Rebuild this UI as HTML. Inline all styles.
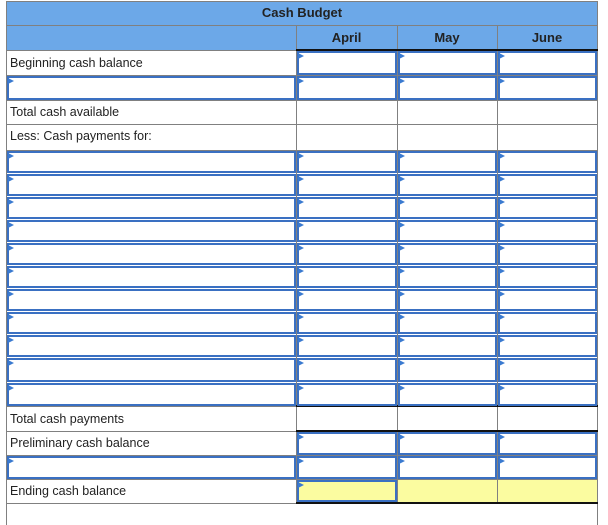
<!DOCTYPE html><html><head><style>
body{margin:0;width:608px;height:525px;background:#fff;position:relative;overflow:hidden;font-family:"Liberation Sans",Arial,sans-serif;font-size:12.5px;color:#222}
div{position:absolute;box-sizing:border-box}
.h{left:6px;width:592px;height:1px;background:#808080}
.v{width:1px;background:#808080}
.b{border:2px solid #3a70c2}
.b::before{content:"";position:absolute;left:-1px;top:0;border-left:6px solid #3a7ad0;border-top:3.5px solid transparent;border-bottom:3.5px solid transparent}
.t{left:10px;line-height:24px}
.y{background:#fbfca0}
.k{height:2px;background:#111}
</style></head><body>
<div style="left:6px;top:1px;width:592px;height:49px;background:#6ca8e8"></div>
<div style="left:6px;top:5px;width:592px;text-align:center;font-weight:bold;font-size:13px">Cash Budget</div>
<div style="left:296px;top:30px;width:101px;text-align:center;font-weight:bold;font-size:13px">April</div>
<div style="left:397px;top:30px;width:100px;text-align:center;font-weight:bold;font-size:13px">May</div>
<div style="left:497px;top:30px;width:100px;text-align:center;font-weight:bold;font-size:13px">June</div>
<div class="h" style="top:1px"></div><div class="h" style="top:25px;left:6px"></div>
<!-- yellow -->
<div class="y" style="left:297px;top:480px;width:300px;height:23px"></div>
<!-- verticals -->
<div class="v" style="left:6px;top:1px;height:524px"></div>
<div class="v" style="left:597px;top:1px;height:524px"></div>
<div class="v" style="left:296px;top:25px;height:478px"></div>
<div class="v" style="left:397px;top:25px;height:478px"></div>
<div class="v" style="left:497px;top:25px;height:478px"></div>
<!-- horizontals -->
<div class="h" style="top:50px"></div><div class="k h" style="top:49px;left:296px;width:302px"></div>
<div class="h" style="top:75px"></div><div class="h" style="top:100px"></div><div class="h" style="top:124px"></div><div class="h" style="top:150px"></div>
<div class="h" style="top:406px"></div><div class="k h" style="top:405px;left:296px;width:302px"></div>
<div class="h" style="top:431px"></div><div class="k h" style="top:430px;left:296px;width:302px"></div>
<div class="h" style="top:455px"></div><div class="h" style="top:479px"></div>
<div class="h" style="top:503px"></div><div class="k h" style="top:502px;left:296px;width:302px"></div>
<!-- labels -->
<div class="t" style="top:51px">Beginning cash balance</div>
<div class="t" style="top:100px">Total cash available</div>
<div class="t" style="top:124px">Less: Cash payments for:</div>
<div class="t" style="top:407px">Total cash payments</div>
<div class="t" style="top:431px">Preliminary cash balance</div>
<div class="t" style="top:479px">Ending cash balance</div>
<!-- row 50-75 -->
<div class="b" style="left:297px;top:51px;width:100px;height:24px"></div><div class="b" style="left:398px;top:51px;width:99px;height:24px"></div><div class="b" style="left:498px;top:51px;width:99px;height:24px"></div>
<!-- row 75-100 -->
<div class="b" style="left:7px;top:76px;width:289px;height:24px"></div><div class="b" style="left:297px;top:76px;width:100px;height:24px"></div><div class="b" style="left:398px;top:76px;width:99px;height:24px"></div><div class="b" style="left:498px;top:76px;width:99px;height:24px"></div>
<!-- 11 input rows -->
<div class="b" style="left:7px;top:151px;width:289px;height:22px"></div><div class="b" style="left:297px;top:151px;width:100px;height:22px"></div><div class="b" style="left:398px;top:151px;width:99px;height:22px"></div><div class="b" style="left:498px;top:151px;width:99px;height:22px"></div>
<div class="b" style="left:7px;top:174px;width:289px;height:22px"></div><div class="b" style="left:297px;top:174px;width:100px;height:22px"></div><div class="b" style="left:398px;top:174px;width:99px;height:22px"></div><div class="b" style="left:498px;top:174px;width:99px;height:22px"></div>
<div class="b" style="left:7px;top:197px;width:289px;height:22px"></div><div class="b" style="left:297px;top:197px;width:100px;height:22px"></div><div class="b" style="left:398px;top:197px;width:99px;height:22px"></div><div class="b" style="left:498px;top:197px;width:99px;height:22px"></div>
<div class="b" style="left:7px;top:220px;width:289px;height:22px"></div><div class="b" style="left:297px;top:220px;width:100px;height:22px"></div><div class="b" style="left:398px;top:220px;width:99px;height:22px"></div><div class="b" style="left:498px;top:220px;width:99px;height:22px"></div>
<div class="b" style="left:7px;top:243px;width:289px;height:22px"></div><div class="b" style="left:297px;top:243px;width:100px;height:22px"></div><div class="b" style="left:398px;top:243px;width:99px;height:22px"></div><div class="b" style="left:498px;top:243px;width:99px;height:22px"></div>
<div class="b" style="left:7px;top:266px;width:289px;height:22px"></div><div class="b" style="left:297px;top:266px;width:100px;height:22px"></div><div class="b" style="left:398px;top:266px;width:99px;height:22px"></div><div class="b" style="left:498px;top:266px;width:99px;height:22px"></div>
<div class="b" style="left:7px;top:289px;width:289px;height:22px"></div><div class="b" style="left:297px;top:289px;width:100px;height:22px"></div><div class="b" style="left:398px;top:289px;width:99px;height:22px"></div><div class="b" style="left:498px;top:289px;width:99px;height:22px"></div>
<div class="b" style="left:7px;top:312px;width:289px;height:22px"></div><div class="b" style="left:297px;top:312px;width:100px;height:22px"></div><div class="b" style="left:398px;top:312px;width:99px;height:22px"></div><div class="b" style="left:498px;top:312px;width:99px;height:22px"></div>
<div class="b" style="left:7px;top:335px;width:289px;height:22px"></div><div class="b" style="left:297px;top:335px;width:100px;height:22px"></div><div class="b" style="left:398px;top:335px;width:99px;height:22px"></div><div class="b" style="left:498px;top:335px;width:99px;height:22px"></div>
<div class="b" style="left:7px;top:358px;width:289px;height:24px"></div><div class="b" style="left:297px;top:358px;width:100px;height:24px"></div><div class="b" style="left:398px;top:358px;width:99px;height:24px"></div><div class="b" style="left:498px;top:358px;width:99px;height:24px"></div>
<div class="b" style="left:7px;top:383px;width:289px;height:23px"></div><div class="b" style="left:297px;top:383px;width:100px;height:23px"></div><div class="b" style="left:398px;top:383px;width:99px;height:23px"></div><div class="b" style="left:498px;top:383px;width:99px;height:23px"></div>
<!-- prelim -->
<div class="b" style="left:297px;top:432px;width:100px;height:23px"></div><div class="b" style="left:398px;top:432px;width:99px;height:23px"></div><div class="b" style="left:498px;top:432px;width:99px;height:23px"></div>
<!-- blank -->
<div class="b" style="left:7px;top:456px;width:289px;height:23px"></div><div class="b" style="left:297px;top:456px;width:100px;height:23px"></div><div class="b" style="left:398px;top:456px;width:99px;height:23px"></div><div class="b" style="left:498px;top:456px;width:99px;height:23px"></div>
<!-- ending -->
<div class="b" style="left:297px;top:480px;width:100px;height:22px"></div>
</body></html>
